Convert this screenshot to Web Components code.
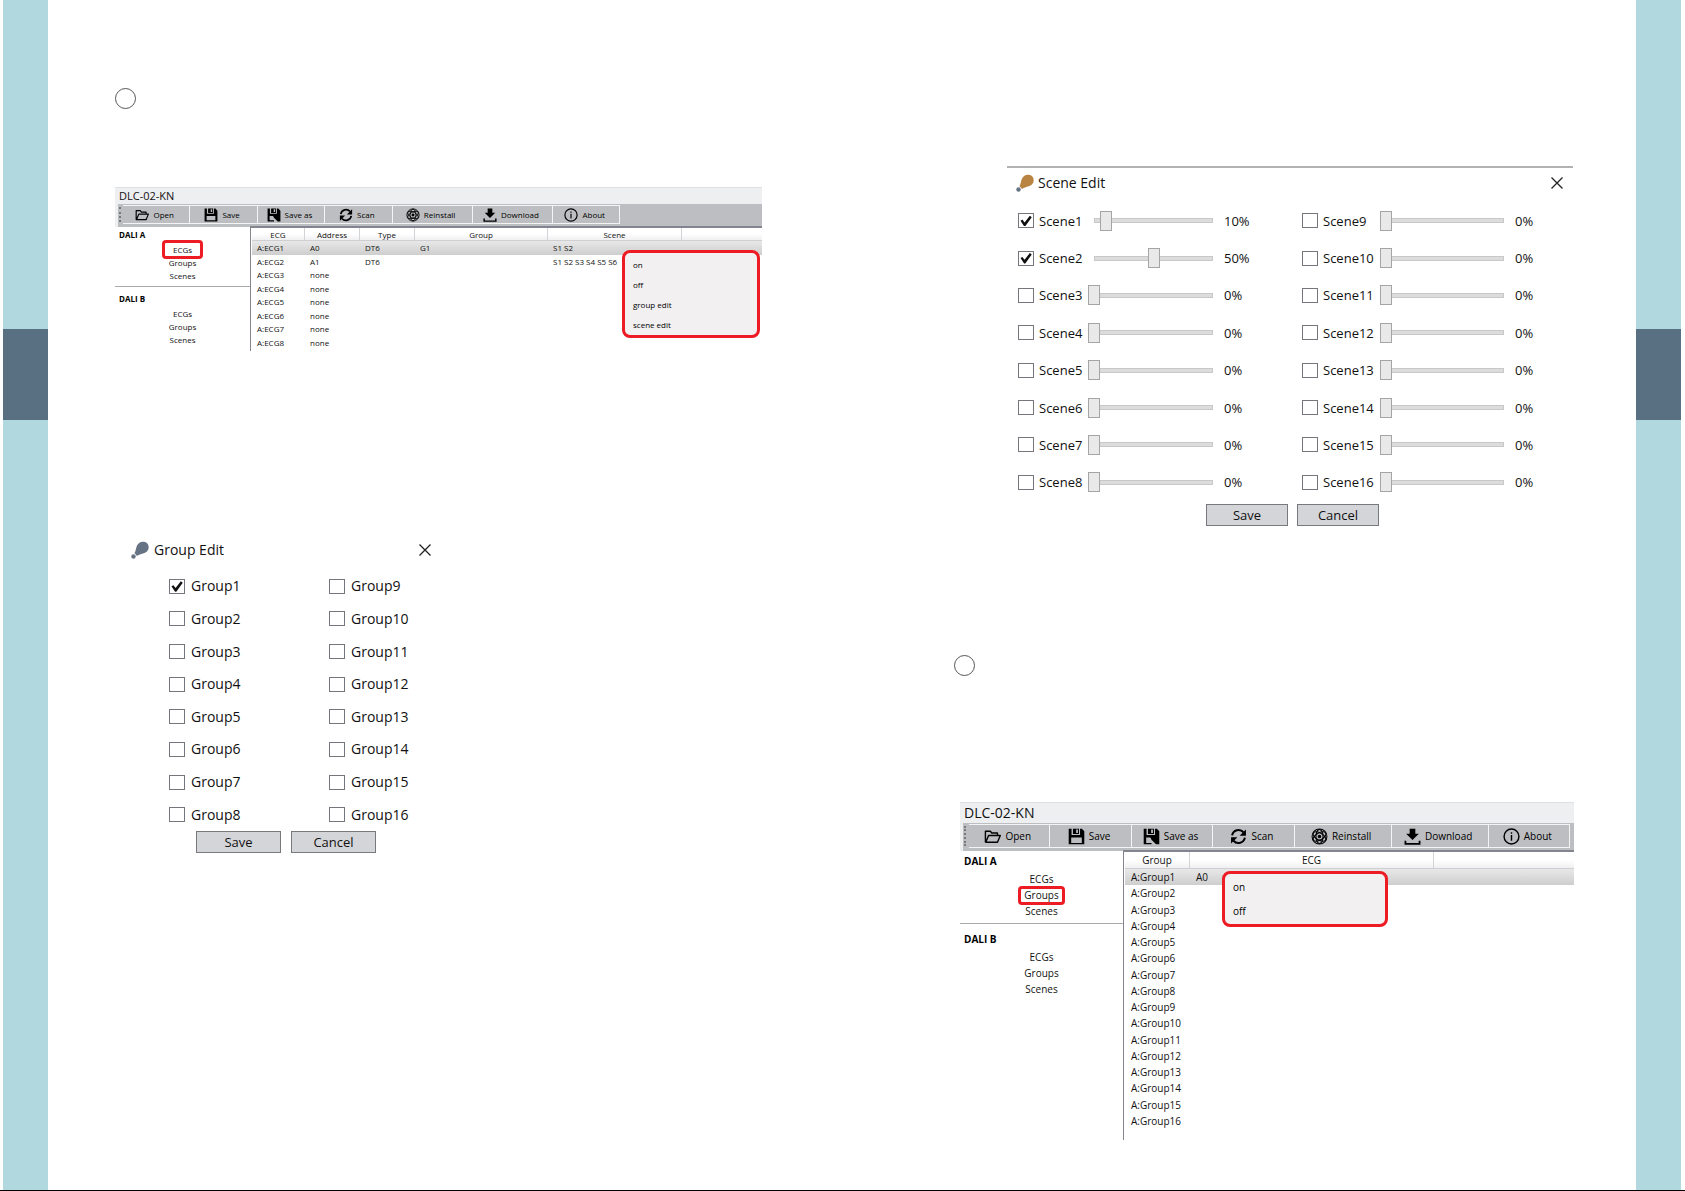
<!DOCTYPE html>
<html lang="en">
<head>
<meta charset="utf-8">
<title>DLC-02-KN manual</title>
<style>
  html, body { margin: 0; }
  body { background: #fff; color: #111; font-family: "Open Sans", "Noto Sans", sans-serif; font-size: 13px; }
</style>
</head>
<body>
<manual-spread>
  <manual-page slot="left" class="left">
    <step-mark></step-mark>
    <dali-app class="small" name="DLC-02-KN" active="ECGs" view="ecgs"></dali-app>
    <group-dialog></group-dialog>
  </manual-page>
  <manual-page slot="right" class="right">
    <scene-dialog></scene-dialog>
    <step-mark></step-mark>
    <dali-app class="large" name="DLC-02-KN" active="Groups" view="groups"></dali-app>
  </manual-page>
</manual-spread>

<script>
const define = (name, css, body, after) => customElements.define(name, class extends HTMLElement {
  connectedCallback() {
    if (this.shadowRoot) return;
    const root = this.attachShadow({ mode: 'open' });
    root.innerHTML = `<style>*{box-sizing:border-box}${css}</style>${typeof body === 'function' ? body(this) : body}`;
    if (after) after(this, root);
  }
});

const ICONS = {
  open: '<path d="M2 20V4.500h7l2 2.500h8v3.500M2.500 20 6.500 10.500H23L19 20Z" fill="none" stroke="currentColor" stroke-width="2" stroke-linejoin="round"/>',
  save: '<path fill-rule="evenodd" d="M1 1H5V10H17V1H19.500L23 4.500V23H1ZM4.500 13.500V21H19.500V13.500ZM7 1H15.500V8.500H7ZM11.500 2V7H14V2Z"/>',
  saveas: '<path fill-rule="evenodd" d="M1 1H5V10H17V1H19.500L23 4.500V23H19L11 13.500H4.500V21H12V23H1ZM7 1H15.500V8.500H7ZM11.500 2V7H14V2Z"/><path d="M10 12.500 14.500 13.500 21 20.500 18.500 23 12 16.500Z"/>',
  scan: '<path d="M3 10.500A9.200 9.200 0 0 1 19 6M21 13.500A9.200 9.200 0 0 1 5 18" fill="none" stroke="currentColor" stroke-width="2.800"/><path d="M22.500 2V11H13.500ZM1.500 22V13H10.500Z"/>',
  reinstall: '<g fill="none" stroke="currentColor" stroke-width="1.500"><circle cx="12" cy="12" r="10.500"/><ellipse cx="12" cy="12" rx="5" ry="10"/><ellipse cx="12" cy="12" rx="5" ry="10" transform="rotate(60 12 12)"/><ellipse cx="12" cy="12" rx="5" ry="10" transform="rotate(120 12 12)"/></g><circle cx="12" cy="12" r="2.500"/>',
  download: '<path d="M8 1H16V8H21L12 17 3 8H8Z"/><path d="M2 18V22.500H22V18" fill="none" stroke="currentColor" stroke-width="2.500"/>',
  about: '<circle cx="12" cy="12" r="10.500" fill="none" stroke="currentColor" stroke-width="2"/><path d="M11 10H13V18H11ZM11 6H13V8H11Z"/>'
};

define('manual-spread', `
  :host { display: grid; grid-template-columns: 45px 1fr 1fr 45px; min-height: 100vh; padding: 0 4px 0 3px; border-bottom: 1px solid #000; box-sizing: border-box; }
  .edge { background: #b1d8df; padding-top: 329px; }
  .tab { height: 91px; background: #587082; }`,
  `<div class="edge"><div class="tab"></div></div><slot name="left"></slot><slot name="right"></slot><div class="edge"><div class="tab"></div></div>`);

define('manual-page', `
  :host { display: flex; flex-direction: column; min-width: 0; }
  :host(.left) { padding: 88px 80px 0 67px; }
  :host(.right) { padding: 166px 62px 0 118px; }
  ::slotted(dali-app.small) { margin-top: 78px; }
  ::slotted(group-dialog) { margin: 184px 0 0 16px; }
  ::slotted(scene-dialog) { margin: 0 1px 129px 47px; }
  ::slotted(dali-app.large) { margin-top: 126px; }`, '<slot></slot>');

define('step-mark', `:host { display: block; box-sizing: border-box; width: 21px; height: 21px; border: 1px solid #555; border-radius: 50%; }
  :host-context(.right) { margin-left: -6px; }`, '');

define('tool-button', `
  :host { display: flex; min-width: 0; border: 1px solid #f4f4f5; border-left: 0; }
  button { flex: 1; display: flex; align-items: center; justify-content: center; gap: 4px; margin: 0; padding: 0 3px 0 0; border: 0; background: #bdbec1; font: inherit; color: #000; white-space: nowrap; }
  svg { width: var(--icon); height: var(--icon); fill: currentColor; flex: none; }`,
  el => `<button type="button"><svg viewBox="0 0 24 24" aria-hidden="true">${ICONS[el.getAttribute('icon')]}</svg><slot></slot></button>`);

define('nav-group', `
  :host { display: block; padding: 0 0 4px; }
  :host([second]) { border-top: 1px solid #aaa; padding-top: var(--second); }
  h2 { margin: 0; padding-left: 4px; font-size: inherit; line-height: var(--head); font-weight: 700; color: #000; }
  ul { margin: 0; padding: 0; list-style: none; }
  li { height: var(--item); display: flex; align-items: center; justify-content: center; }
  a { color: #111; text-decoration: none; text-align: center; line-height: 13px; min-width: var(--mark); }
  a.on { outline: 3px solid #ed1c24; border-radius: 1px; }`,
  el => `<h2>${el.getAttribute('label')}</h2><ul>${['ECGs', 'Groups', 'Scenes'].map(t =>
    `<li><a href="#${t}" class="${t === el.getAttribute('active') ? 'on' : ''}">${t}</a></li>`).join('')}</ul>`);

const VIEWS = {
  ecgs: {
    cols: [['ECG', 53], ['Address', 55], ['Type', 55], ['Group', 133], ['Scene', 134], ['', 80]],
    rows: [['A:ECG1', 'A0', 'DT6', 'G1', 'S1 S2', ''], ['A:ECG2', 'A1', 'DT6', '', 'S1 S2 S3 S4 S5 S6', ''],
      ...[3, 4, 5, 6, 7, 8].map(n => ['A:ECG' + n, 'none', '', '', '', ''])],
    menu: ['on', 'off', 'group edit', 'scene edit']
  },
  groups: {
    cols: [['Group', 65], ['ECG', 244], ['', 140]],
    rows: Array.from({ length: 16 }, (_, i) => ['A:Group' + (i + 1), i ? '' : 'A0', '']),
    menu: ['on', 'off']
  }
};

define('device-table', `
  :host { display: block; border-top: 2px solid #85858f; border-left: 1px solid #85858f; padding-left: 1px; }
  table { width: 100%; height: var(--table); border-collapse: separate; border-spacing: 0; table-layout: fixed; line-height: var(--line); }
  th { height: var(--thead); padding: 0; font-weight: 400; text-align: center; background: linear-gradient(#fff 50%, #f0f0f2); border-right: 1px solid #d4d4d8; border-bottom: 1px solid #cfcfd3; }
  th:last-child { border-right: 0; }
  td { padding: 0 0 0 var(--cell); text-align: left; white-space: nowrap; }
  tr.sel td { background: linear-gradient(#e8e8e8, #cecece); }`,
  el => {
    const v = VIEWS[el.getAttribute('view')];
    const sum = v.cols.reduce((s, c) => s + c[1], 0);
    return `<table><colgroup>${v.cols.map(c => `<col style="width:${c[1] / sum * 100}%">`).join('')}</colgroup>
    <thead><tr>${v.cols.map(c => `<th scope="col">${c[0]}</th>`).join('')}</tr></thead>
    <tbody>${v.rows.map((r, i) => `<tr class="${i ? '' : 'sel'}">${r.map(c => `<td>${c}</td>`).join('')}</tr>`).join('')}</tbody></table>`;
  });

define('context-menu', `
  :host { display: flex; flex-direction: column; box-sizing: border-box; padding: 1px 0; border: 3px solid #ed1c24; border-radius: 8px; background: #f2f0f1; }
  button { height: var(--entry); margin: 0; padding: 0 8px; border: 0; background: none; font: inherit; color: #000; text-align: left; }`,
  el => VIEWS[el.getAttribute('view')].menu.map(t => `<button type="button">${t}</button>`).join(''));

define('dali-app', `
  :host { display: block; position: relative; }
  :host(.small) { font-size: 8px; --title: 17px; --title-size: 11px; --bar: 23px; --icon: 14px; --side: 135px; --head: 16px; --item: 13px; --mark: 35px; --second: 4px; --table: 121px; --thead: 13px; --line: 11px; --cell: 5px; --entry: 20px; --menu-w: 138px; --menu-top: 63px; --menu-right: 2px; --end: 2px; --grip: 4px; }
  :host(.large) { font-size: 10px; --title: 21px; --title-size: 14px; --bar: 28px; --icon: 17px; --side: 163px; --head: 20px; --item: 16px; --mark: 41px; --second: 5px; --table: 277px; --thead: 17px; --line: 14px; --cell: 6px; --entry: 24px; --menu-w: 166px; --menu-top: 69px; --menu-right: 186px; --end: 11px; --grip: 5px; }
  header { box-sizing: border-box; height: var(--title); padding-left: 4px; border-top: 1px solid #dfe0e2; background: #eeeff1; font-size: var(--title-size); line-height: calc(var(--title) - 1px); color: #111; }
  nav { display: flex; height: var(--bar); background: #bdbec1; border-left: 3px solid #eeeff1; padding: 1px 0 3px; }
  .grip { flex: none; width: var(--grip); margin: 2px 0 2px 1px; border-left: 2px dotted #77787c; }
  tool-button { flex: 67 1 0; }
  tool-button.wide { flex-grow: 80; }
  :host(.small) .rest { flex: none; width: 22%; }
  :host(.large) .rest { flex: none; width: 4px; }
  main { display: grid; grid-template-columns: var(--side) 1fr; }
  device-table { margin-top: -1px; padding-bottom: var(--end); }
  context-menu { position: absolute; top: var(--menu-top); right: var(--menu-right); width: var(--menu-w); }`,
  el => `<header>${el.getAttribute('name')}</header>
  <nav><span class="grip"></span>
    <tool-button icon="open">Open</tool-button><tool-button icon="save">Save</tool-button><tool-button icon="saveas">Save as</tool-button>
    <tool-button icon="scan">Scan</tool-button><tool-button class="wide" icon="reinstall">Reinstall</tool-button>
    <tool-button class="wide" icon="download">Download</tool-button><tool-button icon="about">About</tool-button><span class="rest"></span></nav>
  <main><aside><nav-group label="DALI A" active="${el.getAttribute('active')}"></nav-group><nav-group second label="DALI B"></nav-group></aside>
  <device-table view="${el.getAttribute('view')}"></device-table></main>
  <context-menu view="${el.getAttribute('view')}"></context-menu>`);

define('dialog-title', `
  :host { display: flex; align-items: center; gap: 5px; height: 30px; }
  svg { width: 18px; height: 18px; flex: none; }
  h2 { flex: 1; margin: 0; font-size: 14px; font-weight: 400; line-height: 18px; }
  button { width: 12px; height: 12px; margin: 0; padding: 0; border: 0; background: none; display: flex; }
  button svg { width: 12px; height: 12px; }`,
  el => `<svg viewBox="0 0 18 18" aria-hidden="true"><path d="M3.500 12C5 9.500 4.800 7 6 4.500C7.600 1 11 0 14 1C17.500 2.200 18.500 6 17 9C15.800 11.500 13.500 12.200 11 12.800C9 13.300 7.500 14 6 15Z" fill="${el.getAttribute('bulb')}"/><circle cx="2.500" cy="15.500" r="2.200" fill="#667384"/></svg>
  <h2><slot></slot></h2><button type="button" aria-label="Close"><svg viewBox="0 0 12 12"><path d="M.5.5l11 11M11.500.5l-11 11" stroke="#222" stroke-width="1.300"/></svg></button>`);

define('check-field', `
  :host { display: flex; align-items: center; }
  label { display: flex; align-items: center; gap: var(--gap, 5px); line-height: 18px; white-space: nowrap; }
  input { appearance: none; flex: none; width: 16px; height: 15px; margin: 0; border: 1px solid #74767c; background: #fff; display: grid; place-items: center; }
  input:checked::before { content: ""; width: 12px; height: 11px; background: #111; clip-path: polygon(4% 50%, 20% 40%, 38% 66%, 82% 4%, 98% 18%, 44% 100%, 34% 100%); }`,
  el => `<label><input type="checkbox" ${el.hasAttribute('checked') ? 'checked' : ''}><slot></slot></label>`);

define('dialog-actions', `
  :host { display: flex; }
  button { margin: 0; padding: 0; width: var(--button, 82px); height: 22px; border: 1px solid #77797d; background: #d4d5d8; font: inherit; line-height: 18px; color: #111; }`,
  '<button type="button">Save</button><button type="button">Cancel</button>');

define('group-dialog', `
  :host { display: block; max-width: 300px; }
  .grid { display: grid; grid-auto-flow: column; grid-template: repeat(8, 1fr) / 160px 1fr; height: 261px; margin: 5px 0 0 38px; font-size: 14px; --gap: 6px; }
  dialog-actions { --button: 85px; gap: 10px; margin-left: 65px; }`,
  () => `<dialog-title bulb="#667384">Group Edit</dialog-title><div class="grid">${Array.from({ length: 16 }, (_, i) =>
    `<check-field ${i ? '' : 'checked'}>Group${i + 1}</check-field>`).join('')}</div><dialog-actions></dialog-actions>`);

define('scene-row', `
  :host { display: grid; grid-template-columns: 70px 1fr 83px; align-items: center; }
  :host(.second) { grid-template-columns: 78px 1fr 63px; }
  input { appearance: none; width: 100%; min-width: 0; height: 20px; margin: 0; background: linear-gradient(#dcdcdc, #dcdcdc) center / calc(100% - 14px) 3px no-repeat, linear-gradient(#c8c8c8, #c8c8c8) center / calc(100% - 12px) 5px no-repeat; }
  input::-webkit-slider-thumb { appearance: none; width: 12px; height: 20px; border: 1px solid #a5a5a5; background: #e9e9e9; }
  output { padding-left: 5px; line-height: 18px; }`,
  el => {
    const v = el.getAttribute('value'), n = el.getAttribute('name');
    return `<check-field ${+v ? 'checked' : ''}>${n}</check-field><input type="range" min="0" max="100" value="${v}" aria-label="${n} level"><output>${v}%</output>`;
  },
  (el, root) => root.querySelector('input').addEventListener('input', e => { root.querySelector('output').textContent = e.target.value + '%'; }));

define('scene-dialog', `
  :host { display: block; border-top: 2px solid #b2b2b2; }
  dialog-title { padding: 0 10px 0 9px; gap: 4px; }
  .grid { display: grid; grid-auto-flow: column; grid-template: repeat(8, 1fr) / 284fr 271fr; height: 299px; margin: 4px 0 3px 11px; }
  dialog-actions { gap: 9px; justify-content: center; padding-left: 5px; }`,
  () => `<dialog-title bulb="#b98442">Scene Edit</dialog-title><div class="grid">${Array.from({ length: 16 }, (_, i) =>
    `<scene-row class="${i > 7 ? 'second' : ''}" name="Scene${i + 1}" value="${[10, 50][i] || 0}"></scene-row>`).join('')}</div><dialog-actions></dialog-actions>`);
</script>
</body>
</html>
